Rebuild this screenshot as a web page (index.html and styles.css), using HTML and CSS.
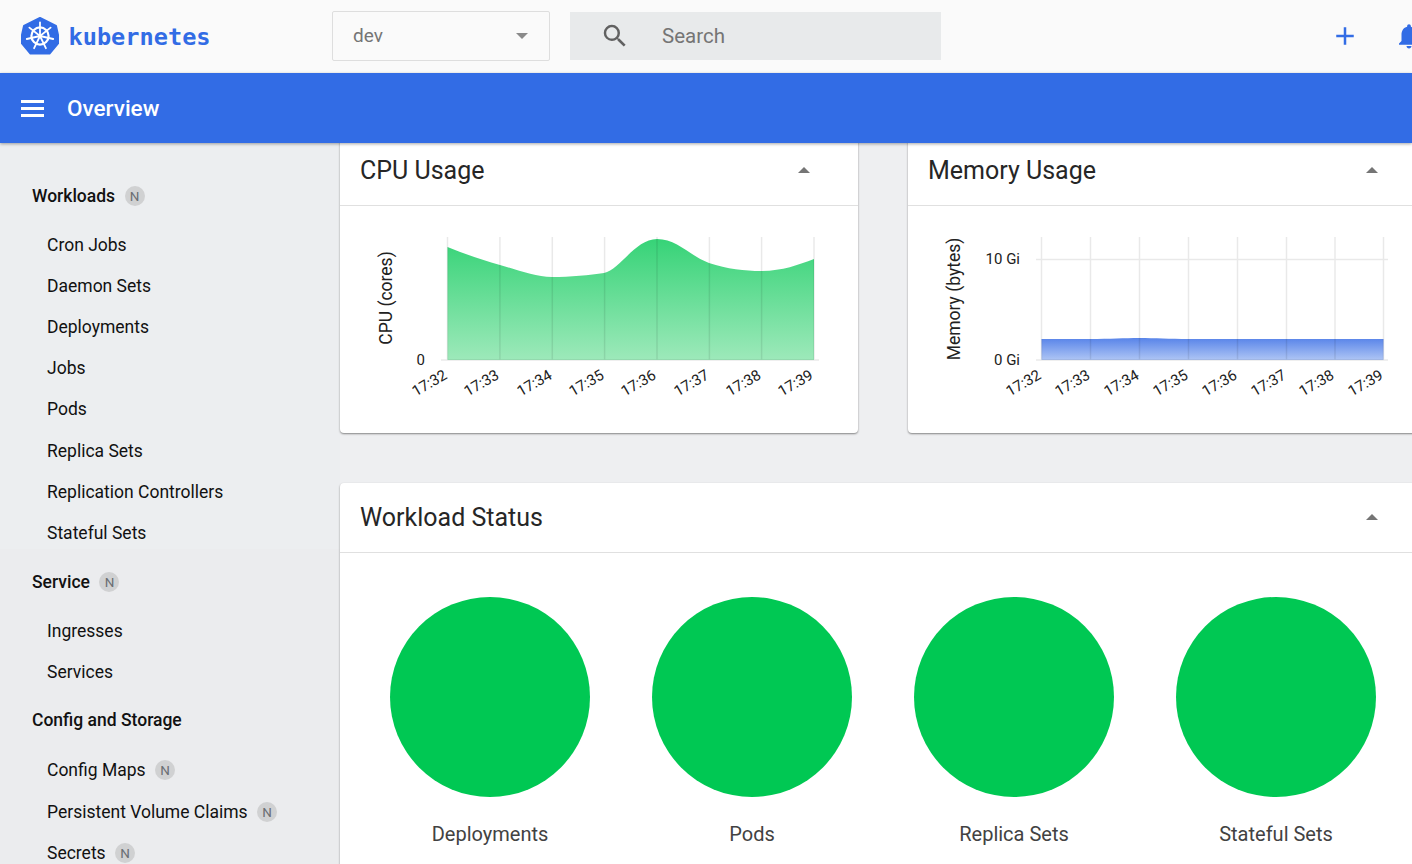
FILE: index.html
```html
<!DOCTYPE html>
<html lang="en">
<head>
    <meta charset="UTF-8">
    <title>Overview - Kubernetes Dashboard</title>
    <link rel="stylesheet" href="styles.css">
</head>
<body>
    <header class="topbar">
        <div class="brand">
            <svg class="brand-logo" viewBox="21 16 38 39">
                <polygon points="40,18.5 56,26.5 59.5,42 49.5,54 30.5,54 20.5,42 24,26.5" transform="translate(0 -0.5)" fill="#326ce5" stroke="#326ce5" stroke-width="2" stroke-linejoin="round"/>
                <g fill="none" stroke="#fff">
                    <circle cx="40" cy="36" r="8.6" stroke-width="2.2"/>
                    <g stroke-width="1.8" stroke-linecap="round">
                        <path d="M40 36V22.5"/>
                        <path d="M40 36L50.6 27.6"/>
                        <path d="M40 36L53.2 39"/>
                        <path d="M40 36L45.9 48.2"/>
                        <path d="M40 36L34.1 48.2"/>
                        <path d="M40 36L26.8 39"/>
                        <path d="M40 36L29.4 27.6"/>
                    </g>
                </g>
                <circle cx="40" cy="36" r="1.8" fill="#fff"/>
            </svg>
            <span class="brand-name">kubernetes</span>
        </div>
        <div class="ns-select">
            <span>dev</span>
            <i class="caret caret-down"></i>
        </div>
        <div class="search">
            <svg class="search-icon" viewBox="0 0 24 24"><path d="M15.5 14h-.79l-.28-.27A6.47 6.47 0 0 0 16 9.5 6.5 6.5 0 1 0 9.5 16c1.61 0 3.09-.59 4.23-1.57l.27.28v.79l5 4.99L20.49 19l-4.99-5zm-6 0C7.01 14 5 11.99 5 9.5S7.01 5 9.5 5 14 7.01 14 9.5 11.99 14 9.5 14z"/></svg>
            <span>Search</span>
        </div>
        <svg class="action-plus" viewBox="0 0 24 24"><path d="M19 13h-6v6h-2v-6H5v-2h6V5h2v6h6v2z"/></svg>
        <svg class="action-bell" viewBox="0 0 24 24"><path d="M12 22c1.1 0 2-.9 2-2h-4c0 1.1.9 2 2 2zm6-6v-5c0-3.07-1.63-5.64-4.5-6.32V4c0-.83-.67-1.5-1.5-1.5s-1.5.67-1.5 1.5v.68C7.64 5.36 6 7.92 6 11v5l-2 2v1h16v-1l-2-2z"/></svg>
    </header>

    <div class="toolbar">
        <div class="hamburger"><span></span><span></span><span></span></div>
        <h1>Overview</h1>
    </div>

    <div class="content">
        <nav class="sidebar">
            <div class="nav-head">Workloads <b class="badge">N</b></div>
            <a>Cron Jobs</a>
            <a>Daemon Sets</a>
            <a>Deployments</a>
            <a>Jobs</a>
            <a>Pods</a>
            <a>Replica Sets</a>
            <a>Replication Controllers</a>
            <a>Stateful Sets</a>
            <div class="nav-head">Service <b class="badge">N</b></div>
            <a>Ingresses</a>
            <a>Services</a>
            <div class="nav-head nav-head-tight">Config and Storage</div>
            <a>Config Maps <b class="badge">N</b></a>
            <a>Persistent Volume Claims <b class="badge">N</b></a>
            <a>Secrets <b class="badge">N</b></a>
        </nav>

        <main class="main">
            <div class="chart-row">
                <section class="card">
                    <div class="card-head">
                        <h2>CPU Usage</h2>
                        <i class="caret caret-up"></i>
                    </div>
                    <svg class="chart" viewBox="340 206 518 227">
                        <defs>
                            <linearGradient id="cpu-fill" x1="0" y1="0" x2="0" y2="1">
                                <stop offset="0" stop-color="#36d377"/>
                                <stop offset="1" stop-color="#9de9ba"/>
                            </linearGradient>
                        </defs>
                        <path fill="url(#cpu-fill)" d="M447.5 247C465 254 482 260 500 265C518 270 535 277 552 277C570 277 590 275 604 273C620 270 635 239 657 239C677 239 690 256 709 263C727 269 745 271 761 271C782 271 798 265 814 259V360H447.5Z"/>
                        <g class="grid">
                            <path d="M447.5 237V360M499.9 237V360M552.3 237V360M604.6 237V360M657 237V360M709.4 237V360M761.6 237V360M814 237V360M441 360H819"/>
                        </g>
                        <text class="axis-title" transform="translate(391.5 298) rotate(-90)">CPU (cores)</text>
                        <text class="tick" x="425" y="365" text-anchor="end">0</text>
                        <g class="tick" text-anchor="end">
                            <text transform="translate(448 378) rotate(-30)">17:32</text>
                            <text transform="translate(500 378) rotate(-30)">17:33</text>
                            <text transform="translate(553 378) rotate(-30)">17:34</text>
                            <text transform="translate(605 378) rotate(-30)">17:35</text>
                            <text transform="translate(657 378) rotate(-30)">17:36</text>
                            <text transform="translate(710 378) rotate(-30)">17:37</text>
                            <text transform="translate(762 378) rotate(-30)">17:38</text>
                            <text transform="translate(814 378) rotate(-30)">17:39</text>
                        </g>
                    </svg>
                </section>
                <section class="card">
                    <div class="card-head">
                        <h2>Memory Usage</h2>
                        <i class="caret caret-up"></i>
                    </div>
                    <svg class="chart" viewBox="908 206 518 227">
                        <defs>
                            <linearGradient id="mem-fill" x1="0" y1="0" x2="0" y2="1">
                                <stop offset="0" stop-color="#5884e9"/>
                                <stop offset="1" stop-color="#aec5f4"/>
                            </linearGradient>
                        </defs>
                        <path fill="url(#mem-fill)" d="M1041.5 339H1090C1110 339 1125 338 1139 338C1155 338 1170 339 1188 339H1383.5V360H1041.5Z"/>
                        <g class="grid">
                            <path d="M1041.5 237V360M1090.5 237V360M1139.5 237V360M1188.5 237V360M1237.5 237V360M1286.5 237V360M1335 237V360M1383.5 237V360M1036 259.5H1388M1036 360H1388"/>
                        </g>
                        <text class="axis-title" transform="translate(959.5 299) rotate(-90)">Memory (bytes)</text>
                        <g class="tick" text-anchor="end">
                            <text x="1020" y="264">10 Gi</text>
                            <text x="1020" y="365">0 Gi</text>
                            <text transform="translate(1042 378) rotate(-30)">17:32</text>
                            <text transform="translate(1091 378) rotate(-30)">17:33</text>
                            <text transform="translate(1140 378) rotate(-30)">17:34</text>
                            <text transform="translate(1189 378) rotate(-30)">17:35</text>
                            <text transform="translate(1238 378) rotate(-30)">17:36</text>
                            <text transform="translate(1287 378) rotate(-30)">17:37</text>
                            <text transform="translate(1335 378) rotate(-30)">17:38</text>
                            <text transform="translate(1384 378) rotate(-30)">17:39</text>
                        </g>
                    </svg>
                </section>
            </div>

            <section class="card status-card">
                <div class="card-head">
                    <h2>Workload Status</h2>
                    <i class="caret caret-up"></i>
                </div>
                <div class="status-grid">
                    <div class="status-item"><div class="status-circle"></div><span>Deployments</span></div>
                    <div class="status-item"><div class="status-circle"></div><span>Pods</span></div>
                    <div class="status-item"><div class="status-circle"></div><span>Replica Sets</span></div>
                    <div class="status-item"><div class="status-circle"></div><span>Stateful Sets</span></div>
                </div>
            </section>
        </main>

        <!-- faint window ghost left over in the capture -->
        <div class="ghost">
            <span class="ghost-1">ires/</span>
            <span class="ghost-1b">_024.png - Shutter</span>
            <span class="ghost-2">dow</span>
            <span class="ghost-3">Edit</span>
            <span class="ghost-4">Export</span>
            <span class="ghost-5">_024.png</span>
            <span class="ghost-6">N/A</span>
            <span class="ghost-7">N/A</span>
            <span class="ghost-8">N/A</span>
            <span class="ghost-9">N/A</span>
        </div>
    </div>
</body>
</html>
```

FILE: styles.css
```css
* {
    box-sizing: border-box;
}

html, body {
    height: 864px;
    overflow: hidden;
}

body {
    margin: 0;
    width: 1412px;
    background: #eeeff1;
    font-family: Roboto, sans-serif;
    color: #212121;
}

.topbar {
    display: flex;
    align-items: center;
    height: 73px;
    padding-bottom: 1.5px;
    background: #fafafa;
}

.brand {
    display: flex;
    align-items: center;
    flex: none;
    width: 332px;
    padding-left: 21px;
}

.brand-logo {
    width: 38px;
    height: 39px;
}

.brand-name {
    margin: 2px 0 0 9.5px;
    font-family: "DejaVu Sans Mono", monospace;
    font-size: 23.6px;
    font-weight: 700;
    color: #326ce5;
}

.ns-select {
    display: flex;
    align-items: center;
    justify-content: space-between;
    flex: none;
    width: 218px;
    height: 50px;
    padding: 0 21px 0 20px;
    border: 1px solid #dedede;
    border-radius: 2px;
    font-size: 19px;
    color: #757575;
}

.caret {
    display: block;
    width: 0;
    height: 0;
    border-left: 6px solid transparent;
    border-right: 6px solid transparent;
}

.caret-down {
    border-top: 6px solid #8a8a8a;
}

.caret-up {
    margin-bottom: 2px;
    border-bottom: 6px solid #757575;
}

.search {
    display: flex;
    align-items: center;
    flex: none;
    width: 371px;
    height: 48px;
    margin-left: 20px;
    padding-left: 30px;
    background: #e8eaeb;
    font-size: 20.5px;
    color: #757575;
}

.search-icon {
    width: 30px;
    height: 30px;
    margin-right: 32px;
    fill: #616161;
}

.action-plus {
    flex: none;
    width: 30px;
    height: 30px;
    margin-left: 389px;
    fill: #326ce5;
}

.action-bell {
    flex: none;
    width: 30px;
    height: 30px;
    margin-left: 34px;
    fill: #326ce5;
}

.toolbar {
    position: relative;
    z-index: 2;
    display: flex;
    align-items: center;
    height: 70px;
    padding-left: 21px;
    background: #326ce5;
    box-shadow: 0 1px 3px rgba(0, 0, 0, 0.35);
    color: #fff;
}

.toolbar h1 {
    margin: 0 0 0 23px;
    font-size: 22.5px;
    font-weight: 500;
}

.hamburger {
    display: flex;
    flex-direction: column;
    gap: 4px;
    width: 23px;
}

.hamburger span {
    height: 3px;
    background: #fff;
}

.content {
    position: relative;
    display: flex;
    height: 721px;
}

.sidebar {
    flex: none;
    width: 340px;
    padding: 24px 0 0 47px;
    background: linear-gradient(#eceef0 0, #eceef0 406px, #ebecee 406px, #ebecee 100%);
    font-size: 17.5px;
    color: #111;
}

.sidebar a {
    display: flex;
    align-items: center;
    height: 41.2px;
}

.nav-head {
    display: flex;
    align-items: center;
    height: 57px;
    margin-left: -15px;
    font-weight: 500;
    color: #111;
}

.nav-head-tight {
    height: 55px;
    margin-bottom: 2px;
}

.badge {
    display: block;
    width: 20px;
    height: 20px;
    margin-left: 9.5px;
    border-radius: 50%;
    background: #d0d1d2;
    font-size: 13.5px;
    font-weight: 400;
    line-height: 20px;
    text-align: center;
    color: #6a6e73;
}

.main {
    flex: none;
    width: 1086px;
}

.chart-row {
    display: flex;
    gap: 50px;
    margin-top: -7px;
}

.card {
    background: #fff;
    border-radius: 4px;
    box-shadow: 0 1px 2px rgba(0, 0, 0, 0.45);
}

.chart-row .card {
    flex: none;
    width: 518px;
    height: 297px;
}

.card-head {
    display: flex;
    align-items: center;
    justify-content: space-between;
    height: 70px;
    padding: 0 48px 0 20px;
    border-bottom: 1px solid #e0e0e0;
}

.card-head h2 {
    margin: 0;
    font-size: 25px;
    font-weight: 400;
    color: #262626;
}

.chart {
    display: block;
    width: 518px;
    height: 227px;
}

.grid path {
    fill: none;
    stroke: #000;
    stroke-opacity: 0.085;
    stroke-width: 1.5;
}

.axis-title {
    font-size: 17.5px;
    text-anchor: middle;
    fill: #212121;
}

.tick {
    font-size: 15px;
    fill: #212121;
}

.status-card {
    margin-top: 50px;
    height: 500px;
}

.status-grid {
    display: grid;
    grid-template-columns: repeat(4, 262px);
    padding: 44px 19px 0;
}

.status-item {
    display: flex;
    flex-direction: column;
    align-items: center;
    font-size: 20px;
    color: #424242;
}

.status-circle {
    width: 200px;
    height: 200px;
    margin-bottom: 25px;
    border-radius: 50%;
    background: #00c853;
}

.ghost {
    position: absolute;
    inset: 0;
    pointer-events: none;
    font-size: 17px;
    line-height: 20px;
    color: rgba(0, 0, 0, 0.025);
}

.ghost span {
    position: absolute;
    white-space: nowrap;
}

.ghost-1 { left: 0; top: 266px; }
.ghost-1b { left: 110px; top: 266px; }
.ghost-2 { left: 0; top: 340px; }
.ghost-3 { left: 318px; top: 340px; }
.ghost-4 { left: 385px; top: 340px; }
.ghost-5 { left: 240px; top: 380px; }
.ghost-6 { left: 125px; top: 434px; }
.ghost-7 { left: 265px; top: 434px; }
.ghost-8 { left: 265px; top: 494px; }
.ghost-9 { left: 265px; top: 554px; }
```
